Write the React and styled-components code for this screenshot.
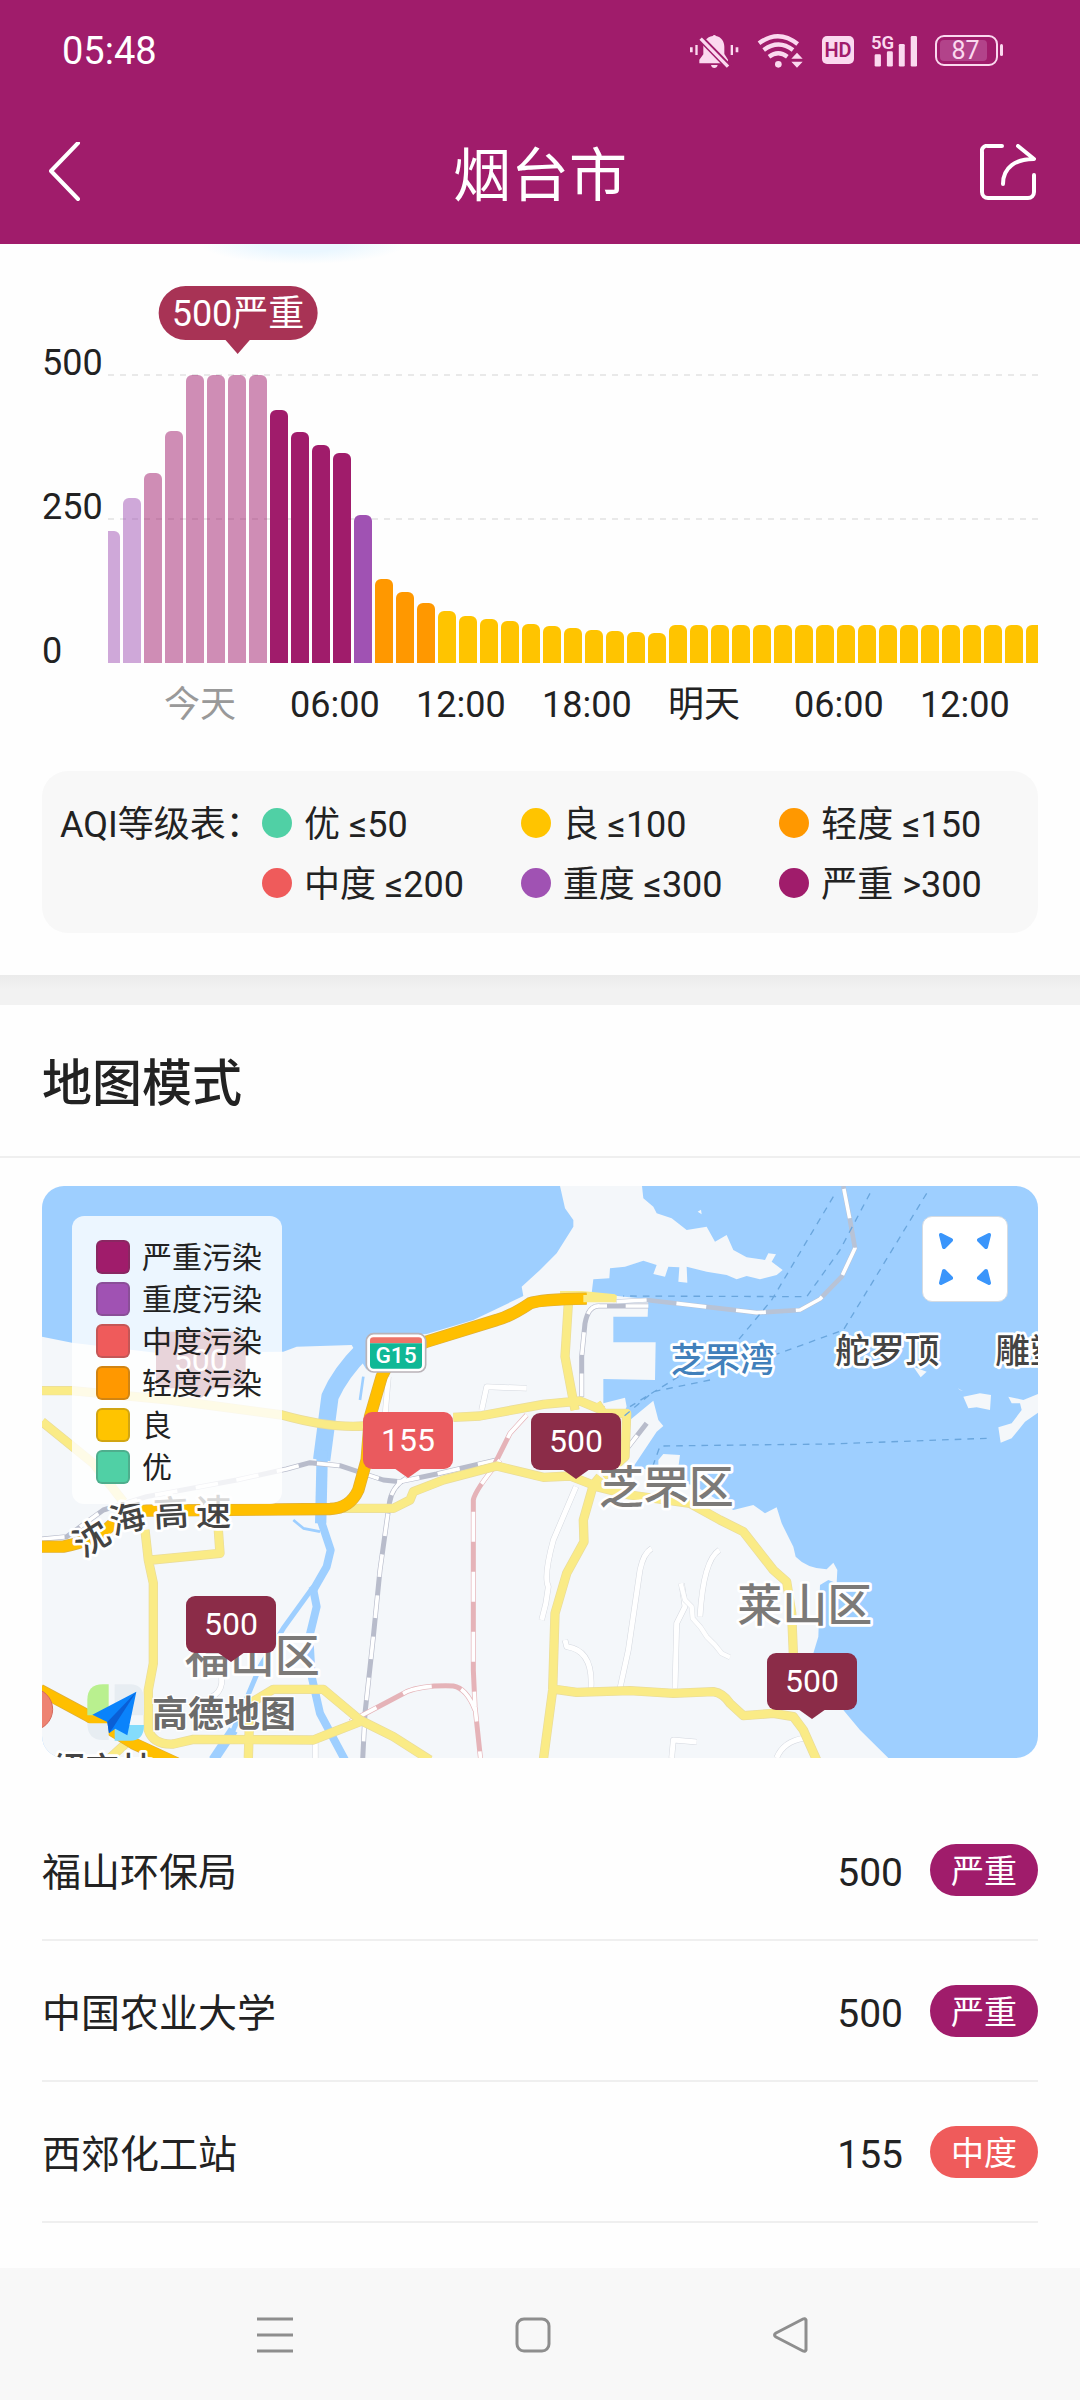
import React from "react";
import styled, { createGlobalStyle } from "styled-components";

const LEVEL = {
  good: "#50d0a5",
  fair: "#ffc400",
  light: "#ff9800",
  medium: "#ef5b5b",
  heavy: "#a052b3",
  severe: "#a01c6b",
};

const GlobalStyle = createGlobalStyle`
  * { box-sizing: border-box; }
  body {
    margin: 0;
    background: #fefefe;
    color: #222;
    font-family: Roboto, "Noto Sans CJK SC", sans-serif;
  }
  button {
    border: 0;
    padding: 0;
    background: none;
    font: inherit;
    color: inherit;
    cursor: pointer;
  }
  h1, h2, ul { margin: 0; padding: 0; }
  svg { display: block; }
`;

const Page = styled.div`
  min-height: 100vh;
  display: flex;
  flex-direction: column;
`;

const Header = styled.header`
  background: ${LEVEL.severe};
  color: #fff;
`;

const StatusBar = styled.div`
  height: 104px;
  padding: 0 77px 4px 62px;
  display: flex;
  align-items: center;
  justify-content: space-between;
`;

const Clock = styled.span`
  padding-top: 2px;
  font-size: 38px;
  line-height: 46px;
`;

const StatusIcons = styled.div`
  display: flex;
  align-items: center;
  gap: 17px;
  color: #fbd9ef;
`;

const HdBadge = styled.span`
  width: 32px;
  height: 28px;
  border-radius: 5px;
  background: #fbd9ef;
  color: ${LEVEL.severe};
  font-size: 20px;
  font-weight: 600;
  line-height: 28px;
  text-align: center;
`;

const Battery = styled.span`
  display: flex;
  align-items: center;
  gap: 2px;
  &::after {
    content: "";
    width: 3px;
    height: 12px;
    border-radius: 2px;
    background: #fbd9ef;
  }
`;

const BatteryCase = styled.span`
  width: 63px;
  height: 31px;
  border: 2px solid #fbd9ef;
  border-radius: 9px;
  padding: 3px;
  display: flex;
`;

const BatteryFill = styled.span`
  flex: 1;
  margin-right: 6px;
  padding-left: 4px;
  border-radius: 4px;
  background: #b2438a;
  font-size: 25px;
  line-height: 22px;
  text-align: center;
`;

const TitleBar = styled.div`
  height: 140px;
  padding: 0 44px 0 49px;
  display: grid;
  grid-template-columns: 1fr auto 1fr;
  align-items: center;
`;

const City = styled.h1`
  padding: 4px 5px 0 0;
  font-size: 58px;
  line-height: 80px;
  font-weight: 400;
`;

const ShareButton = styled.button`
  justify-self: end;
`;

const Forecast = styled.section`
  position: relative;
  padding: 98px 42px 42px;
`;

const Glow = styled.div`
  position: absolute;
  top: 0;
  left: 200px;
  width: 206px;
  height: 20px;
  background: radial-gradient(ellipse 50% 100% at 50% 0, #eaf7ff 40%, #fefefe 100%);
`;

const Chart = styled.div`
  display: grid;
  grid-template-columns: 66px 1fr;
`;

const YAxis = styled.div`
  height: 330px;
  display: flex;
  flex-direction: column;
  justify-content: space-between;
  font-size: 36px;
  line-height: 42px;
`;

const Plot = styled.div`
  position: relative;
  height: 288px;
  margin-top: 33px;
  min-width: 0;
`;

const GridLine = styled.div`
  position: absolute;
  left: 0;
  right: 0;
  top: ${(p) => p.$top};
  height: 2px;
  margin-top: -1px;
  background: repeating-linear-gradient(90deg, #e9e9e9 0 6px, transparent 6px 12px);
`;

const Bars = styled.div`
  position: relative;
  height: 100%;
  display: flex;
  align-items: flex-end;
  justify-content: center;
  gap: 3px;
  overflow: hidden;
`;

const Bar = styled.div`
  flex: 0 0 18px;
  border-radius: 6px 6px 0 0;
  background: ${(p) => LEVEL[p.$level]};
  opacity: ${(p) => (p.$past ? 0.5 : 1)};
`;

const Bubble = styled.div`
  position: absolute;
  left: 130px;
  bottom: calc(100% + 35px);
  transform: translateX(-50%);
  height: 54px;
  padding: 0 13px;
  border-radius: 27px;
  background: #a83355;
  color: #fff;
  font-size: 36px;
  line-height: 56px;
  white-space: nowrap;
  &::after {
    content: "";
    position: absolute;
    top: 100%;
    left: 50%;
    margin: -1px 0 0 -13px;
    border: 13px solid transparent;
    border-top: 15px solid #a83355;
    border-bottom: 0;
  }
`;

const XAxis = styled.div`
  display: flex;
  padding: 12px 0 0 122px;
  font-size: 36px;
  line-height: 42px;
  overflow: hidden;
`;

const Tick = styled.span`
  flex: 0 0 126px;
  color: ${(p) => (p.$past ? "#999" : "#222")};
`;

const LevelCard = styled.div`
  margin-top: 45px;
  padding: 22px 0 20px 18px;
  border-radius: 26px;
  background: #f8f8f8;
  display: grid;
  grid-template-columns: 202px 1fr;
  font-size: 36px;
  line-height: 64px;
`;

const LevelGrid = styled.ul`
  list-style: none;
  display: grid;
  grid-template-columns: repeat(3, 1fr);
`;

const LevelItem = styled.li`
  height: 60px;
  display: flex;
  align-items: flex-start;
  gap: 12px;
  white-space: nowrap;
  &::before {
    content: "";
    width: 30px;
    height: 30px;
    margin-top: 15px;
    border-radius: 50%;
    background: ${(p) => LEVEL[p.$level]};
  }
`;

const Divider = styled.div`
  height: 30px;
  background: linear-gradient(#ebebeb, #f2f2f2 50%);
`;

const SectionTitle = styled.h2`
  padding: 8px 42px 0;
  border-bottom: 2px solid #efefef;
  font-size: 50px;
  font-weight: 500;
  line-height: 143px;
`;

const MapCard = styled.section`
  position: relative;
  margin: 28px 42px 42px;
  border-radius: 22px;
  overflow: hidden;
`;

const MapLegend = styled.ul`
  list-style: none;
  position: absolute;
  top: 30px;
  left: 30px;
  width: 210px;
  && { padding: 18px 0 18px 24px; }
  border-radius: 12px;
  background: rgba(255, 255, 255, 0.8);
  font-size: 30px;
  line-height: 48px;
`;

const MapLegendItem = styled.li`
  height: 42px;
  display: flex;
  align-items: flex-start;
  gap: 12px;
  white-space: nowrap;
  &::before {
    content: "";
    flex: none;
    width: 30px;
    height: 30px;
    margin-top: 6px;
    border: 2px solid rgba(70, 70, 70, 0.25);
    border-radius: 6px;
    background: ${(p) => LEVEL[p.$level]};
  }
`;

const ExpandButton = styled.button`
  position: absolute;
  top: 30px;
  right: 30px;
  width: 86px;
  height: 86px;
  border: 1px solid #d5dbe2;
  border-radius: 10px;
  background: #fff;
  display: grid;
  place-items: center;
`;

const Pin = styled.button`
  position: absolute;
  left: ${(p) => (p.$x / 996) * 100}%;
  top: ${(p) => (p.$y / 572) * 100}%;
  width: 90px;
  height: 57px;
  border-radius: 9px;
  background: ${(p) => p.$color};
  color: #fff;
  font-size: 32px;
  line-height: 57px;
  &::after {
    content: "";
    position: absolute;
    top: 100%;
    left: 50%;
    margin: -1px 0 0 -14px;
    border: 14px solid transparent;
    border-top: 10px solid ${(p) => p.$color};
    border-bottom: 0;
  }
`;

const Stations = styled.ul`
  list-style: none;
  flex: 1;
  && { padding: 0 42px 45px; }
`;

const Station = styled.li`
  height: 141px;
  border-bottom: 2px solid #efefef;
  display: flex;
  align-items: center;
  font-size: 39px;
  line-height: 56px;
`;

const StationName = styled.span`
  flex: 1;
  padding-top: 6px;
`;

const StationValue = styled.span`
  padding-top: 6px;
`;

const Pill = styled.span`
  width: 108px;
  height: 52px;
  margin-left: 27px;
  border-radius: 26px;
  background: ${(p) => LEVEL[p.$level]};
  color: #fff;
  font-size: 33px;
  line-height: 56px;
  text-align: center;
`;

const NavBar = styled.nav`
  height: 133px;
  padding-right: 14px;
  background: #f8f8f8;
  display: flex;
  align-items: center;
  justify-content: center;
  gap: 222px;
`;

const bars = [
  [132, "heavy", 1], [165, "heavy", 1], [190, "severe", 1], [232, "severe", 1],
  [288, "severe", 1], [288, "severe", 1], [288, "severe", 1], [288, "severe", 1],
  [253, "severe"], [231, "severe"], [218, "severe"], [210, "severe"], [148, "heavy"],
  [84, "light"], [71, "light"], [60, "light"],
  ...[52, 47, 44, 42, 39, 37, 35, 33, 32, 31, 30].map((h) => [h, "fair"]),
  ...Array.from({ length: 18 }, () => [38, "fair"]),
];

const ticks = ["今天", "06:00", "12:00", "18:00", "明天", "06:00", "12:00"];

const levels = [
  ["good", "优 ≤50"], ["fair", "良 ≤100"], ["light", "轻度 ≤150"],
  ["medium", "中度 ≤200"], ["heavy", "重度 ≤300"], ["severe", "严重 >300"],
];

const mapLevels = [
  ["severe", "严重污染"], ["heavy", "重度污染"], ["medium", "中度污染"],
  ["light", "轻度污染"], ["fair", "良"], ["good", "优"],
];

const pins = [
  { x: 321, y: 226, value: 155, color: "#ea5a5e" },
  { x: 489, y: 227, value: 500, color: "#8b2c48" },
  { x: 144, y: 410, value: 500, color: "#8b2c48" },
  { x: 725, y: 467, value: 500, color: "#8b2c48" },
];

const stations = [
  ["福山环保局", 500, "severe", "严重"],
  ["中国农业大学", 500, "severe", "严重"],
  ["西郊化工站", 155, "medium", "中度"],
];

const BellOff = () => (
  <svg width="49" height="35" viewBox="38 35 147 105" fill="currentColor" role="img" aria-label="静音">
    <path d="M106 44a6 6 0 0 1 10 0c16 3 25 16 25 32v22l11 17v11H66v-11l12-16V76c0-16 10-29 28-32z" />
    <path d="M101 131h20c-1 6-5 9-10 9s-9-3-10-9zM54 71h7v30h-7zM38 78h8v15h-8zM160 71h7v30h-7zM175 78h8v15h-8z" />
    <path d="M66 47l90 92" stroke={LEVEL.severe} strokeWidth="20" />
    <path d="M70 52l82 84" stroke="currentColor" strokeWidth="10" />
  </svg>
);

const Wifi = () => (
  <svg width="49" height="35" viewBox="237 35 147 105" role="img" aria-label="Wi-Fi">
    <g fill="none" stroke="currentColor" strokeWidth="13">
      <path d="M246 66q58-44 116 2" />
      <path d="M260 86q45-33 88 0" />
      <path d="M276 106q28-20 55 0" />
    </g>
    <circle cx="304" cy="129" r="10" fill="currentColor" />
    <path d="M343 112l17-18 17 18zM343 121h34l-17 18z" fill="currentColor" />
  </svg>
);

const Signal = () => (
  <svg width="47" height="35" viewBox="578 35 142 105" fill="currentColor" role="img" aria-label="5G">
    <text x="578" y="83" fontSize="56" fontWeight="600">5G</text>
    <rect x="589" y="99" width="19" height="37" rx="4" />
    <rect x="626" y="90" width="18" height="46" rx="4" />
    <rect x="662" y="68" width="18" height="68" rx="4" />
    <rect x="698" y="44" width="19" height="92" rx="4" />
  </svg>
);

const BackIcon = () => (
  <svg width="32" height="60" viewBox="0 0 32 60" fill="none" stroke="#fff" strokeWidth="4" strokeLinecap="round" strokeLinejoin="round">
    <path d="M29 1L2 29l27 28" />
  </svg>
);

const ShareIcon = () => (
  <svg width="56" height="60" viewBox="0 0 56 60" fill="none" stroke="#fff" strokeWidth="4" strokeLinecap="round" strokeLinejoin="round">
    <path d="M22 2H8a5 5 0 0 0-6 6v40a6 6 0 0 0 6 6h40a6 6 0 0 0 6-6V31" />
    <path d="M38 2l16 13C36 15 23 23 23 40" />
  </svg>
);

const ExpandIcon = () => (
  <svg width="54" height="54" viewBox="0 0 54 54" fill="#3a95fb" stroke="#3a95fb" strokeWidth="4" strokeLinejoin="round">
    <path d="M3 3l10 5-7 7zM51 3l-10 5 7 7zM3 51l10-5-7-7zM51 51l-10-5 7-7z" />
  </svg>
);

const localRoads =
  "M1355 720L1370 650L1490 655 M2068 1140Q2020 1170 2010 1340 M1638 950L1570 1110Q1540 1220 1555 1250Q1550 1300 1535 1350 M1865 1135Q1840 1150 1830 1200L1795 1440L1770 1555 M1955 1240L1965 1310L1940 1360L1935 1555 M1605 1410L1610 1430Q1690 1440 1683 1555 M1925 1764L1930 1710L2000 1716 M2240 1764Q2260 1715 2320 1705 M575 1500L575 1540Q570 1570 545 1580 M856 1764V1720 M1075 620L1065 740";

const ridgeRoad = "M1952 1240L1965 1290L1985 1310L1988 1345L2012 1372L2030 1400L2055 1425L2075 1450L2100 1462";

const yellowRoads =
  "M36 662H126L420 690L756 735Q900 775 1000 768M1270 742L1350 738L1540 703L1650 693L1720 722 M36 755L190 880L280 995 M345 1080L355 1170L370 1240V1480L355 1560V1680Q370 1725 430 1722L490 1708L850 1710L900 1690L990 1655 M655 1764L660 1600L730 1558H880L990 1650L1090 1700L1200 1770 M365 1170L570 1150L565 1080 M940 1015H1090L1140 990L1150 965L1240 930L1400 888L1540 922L1620 918L1690 945L1710 920 M1700 700L1720 730L1790 730L1785 860L1720 920 M1690 945L1660 1050L1662 1115L1610 1210L1575 1330L1568 1560L1540 1770 M1700 950L1800 975L1980 1000L2070 1050L2140 1085L2230 1200L2270 1235L2285 1330L2290 1450 M1575 1558L1640 1567L1800 1562L1930 1570L2050 1565Q2080 1570 2100 1600L2140 1637L2230 1630L2290 1640L2320 1680L2360 1770 M1615 400L1605 560L1635 720 M240 1764L310 1700";

const expressway =
  "M36 1130H100Q200 1110 250 1060Q290 1025 350 1022L900 1017Q960 1015 985 960L1010 870L1020 740L1055 620L1085 560L1190 515L1400 450Q1440 440 1500 400Q1530 388 1670 386 M30 1560L170 1635L310 1720L440 1780";

const railways =
  "M36 1107L110 1100L220 1020L350 980L620 930L770 897L840 878L930 887L1060 930L1110 935L1220 912L1400 870 M1128 925Q1085 950 1078 1000L1050 1200L1030 1400L1005 1630L998 1770 M1855 408H1710Q1675 405 1665 460L1655 560V680 M1780 850L1850 760";

const pinkRailways =
  "M1490 735L1440 790L1395 880M1410 870Q1335 960 1330 990V1500L1335 1610L1352 1770 M960 1655L1130 1565Q1180 1545 1270 1548Q1310 1555 1335 1620";

const seaRailway = "M1760 395L1850 390L2180 428L2310 420L2370 387L2435 320L2475 235L2460 150L2440 48";

const ferries =
  "M2410 80L2225 390L2125 510M2520 70L2430 240L2330 380L1780 378M2690 70L2440 480L2220 560M2040 630L1870 665L1780 740M2010 580L1800 710M2870 805L2400 822L1890 828L1868 890";

const Basemap = () => (
  <svg width="100%" viewBox="36 48 2988 1716" role="img" aria-label="烟台市空气质量地图">
    <rect x="36" y="48" width="2988" height="1716" fill="#9ecfff" />
    <g fill="#f4f7fa">
      <path d="M36 500L126 518L378 548L760 545L800 530L965 525L1010 600L1020 500L1190 492L1330 450L1480 378L1475 350L1530 300L1580 250L1630 170V150L1605 115L1590 48H1836L1840 85L1870 110L1880 130L1925 145L1970 180L2030 170L2055 215L2090 195L2110 240L2150 262L2205 270L2215 250L2238 253L2225 275L2258 300L2240 315L2190 328L2150 318L2120 328L2090 315L2030 305L1970 290L1972 338L1945 335L1948 292L1915 290L1905 320L1870 312L1880 285L1840 272L1785 290L1740 295L1738 325L1690 328L1685 370L1855 388L1853 440H1750V517H1877L1875 630L1720 627V700L1785 683L1790 710L1775 740L1800 750L1870 692L1885 750L1900 768L1880 785L1810 890L1885 905V870L1900 852L1950 855L1940 930L2000 950L2110 1020L2170 1005L2205 1030L2240 1012L2255 1060L2275 1100L2290 1130L2297 1160Q2330 1195 2390 1198L2410 1178L2422 1200L2420 1240L2395 1230L2370 1245L2365 1400L2350 1450L2440 1620L2490 1680L2575 1764H36z" />
      <path d="M2800 680L2850 670L2883 675L2880 720L2840 712L2815 715zM2935 680L2980 690L3024 672V728L2985 755L2945 805L2912 818L2905 772L2945 760L2975 720L2970 700L2945 700zM2650 590L2690 605L2672 622zM2783 655L2800 664L2790 660zM2003 125l10-6 2 14z" />
    </g>
    <g fill="none" stroke="#9ecfff" strokeLinejoin="round">
      <path d="M1000 540Q930 610 900 680L875 870" strokeWidth="52" />
      <path d="M1035 570V620" stroke="#f4f7fa" strokeWidth="26" />
      <path d="M877 840L872 1060" strokeWidth="34" />
      <path d="M872 1050L902 1140L890 1190L850 1260" strokeWidth="24" />
      <path d="M850 1250L760 1375L690 1490L610 1680L550 1770" strokeWidth="15" />
      <path d="M550 1770L610 1680" strokeWidth="30" />
      <path d="M848 1250L860 1310L838 1400L845 1520L870 1630L945 1770" strokeWidth="24" />
      <path d="M790 1050L820 1075L870 1085M1000 620L990 690" strokeWidth="8" />
    </g>
    <g fill="none" strokeLinejoin="round">
      <path d={localRoads} stroke="#d4d8df" strokeWidth="18" />
      <path d={localRoads} stroke="#fff" strokeWidth="15" />
      <path d={ridgeRoad} stroke="#dfe3e8" strokeWidth="16" />
      <path d={ridgeRoad} stroke="#fff" strokeWidth="13" />
      <path d={railways} stroke="#b8bccb" strokeWidth="15" />
      <path d={railways} stroke="#fff" strokeWidth="11" strokeDasharray="68 56" />
      <path d={pinkRailways} stroke="#e5b3b8" strokeWidth="15" />
      <path d={pinkRailways} stroke="#fff" strokeWidth="11" strokeDasharray="90 90" />
      <path d={yellowRoads} stroke="#e9dc9b" strokeWidth="28" />
      <path d={yellowRoads} stroke="#faeb86" strokeWidth="24" />
      <path d="M1590 375H1655L1755 385" stroke="#faeb86" strokeWidth="24" />
      <path d={expressway} stroke="#dcae3c" strokeWidth="37" />
      <path d={expressway} stroke="#ffbf00" strokeWidth="33" />
      <path d="M1660 386H1760" stroke="#faeb86" strokeWidth="22" />
      <path d={seaRailway} stroke="#b8c3d6" strokeWidth="14" />
      <path d={seaRailway} stroke="#fff" strokeWidth="11" strokeDasharray="90 90" />
      <path d={ferries} stroke="#6aa6dd" strokeWidth="4" strokeDasharray="20 18" />
    </g>
    <circle cx="5" cy="1618" r="63" fill="#ee8372" stroke="#d36a5e" strokeWidth="3" />
    <rect x="1009" y="491" width="178" height="115" rx="22" fill="#fff" stroke="#b9b3b8" strokeWidth="5" />
    <path d="M1020 520v-8q0-10 10-10h136q10 0 10 10v8z" fill="#ee7468" />
    <path d="M1020 520h156v65q0 11-11 11h-134q-11 0-11-11z" fill="#10b896" />
    <text x="1098" y="578" fontSize="68" fontWeight="500" fill="#fff" textAnchor="middle">G15</text>
    <g>
      <rect x="378" y="485" width="269" height="170" rx="27" fill="#8b2c48" />
      <path d="M470 654h84l-42 30z" fill="#8b2c48" />
      <text x="512" y="602" fontSize="96" fill="#fff" textAnchor="middle">500</text>
    </g>
    <g fontWeight="500" stroke="#fff" strokeWidth="16" strokeLinejoin="round" style={{ paintOrder: "stroke" }}>
      <text x="1922" y="606" fontSize="104" fill="#4180bb">芝罘湾</text>
      <text x="2416" y="580" fontSize="104" fill="#444">舵罗顶</text>
      <text x="2896" y="580" fontSize="104" fill="#444">雕塑</text>
      <text x="1706" y="1002" fontSize="135" fill="#7c7a78">芝罘区</text>
      <text x="2122" y="1356" fontSize="135" fill="#7c7a78">莱山区</text>
      <text x="464" y="1508" fontSize="135" fill="#7c7a78">福山区</text>
      <text x="160 250 372 498" y="1165 1095 1070 1065" rotate="-32 -14 -3 0" fontSize="106" fill="#444">沈海高速</text>
      <text x="64" y="1835" fontSize="102" fill="#444">绍京林</text>
    </g>
    <g>
      <path d="M172 1636V1590Q172 1543 218 1543H236V1636z" fill="#b9f08f" />
      <path d="M254 1543H300Q342 1543 342 1590V1636H254zM172 1660H236V1710H218Q172 1710 172 1660z" fill="#e7edf2" />
      <path d="M254 1665H342Q342 1712 300 1712H254z" fill="#84dcfb" />
      <path d="M187 1634L319 1565L292 1696L256 1676L237 1690L232 1656z" fill="#0a83fb" />
      <path d="M232 1656L319 1565L250 1672L237 1690z" fill="#0a5fd6" />
    </g>
    <text x="366" y="1670" fontSize="108" fontWeight="700" fill="#6b6b6b" stroke="#fff" strokeWidth="8" style={{ paintOrder: "stroke" }}>高德地图</text>
  </svg>
);

export default function App() {
  return (
    <Page>
      <GlobalStyle />
      <Header>
        <StatusBar>
          <Clock>05:48</Clock>
          <StatusIcons>
            <BellOff />
            <Wifi />
            <HdBadge>HD</HdBadge>
            <Signal />
            <Battery>
              <BatteryCase>
                <BatteryFill>87</BatteryFill>
              </BatteryCase>
            </Battery>
          </StatusIcons>
        </StatusBar>
        <TitleBar>
          <div>
            <button aria-label="返回"><BackIcon /></button>
          </div>
          <City>烟台市</City>
          <ShareButton aria-label="分享"><ShareIcon /></ShareButton>
        </TitleBar>
      </Header>

      <Forecast>
        <Glow />
        <Chart>
          <YAxis>
            <span>500</span>
            <span>250</span>
            <span>0</span>
          </YAxis>
          <Plot>
            <GridLine $top="0" />
            <GridLine $top="50%" />
            <Bars>
              {bars.map(([height, level, past], i) => (
                <Bar key={i} $level={level} $past={past} style={{ height }} />
              ))}
            </Bars>
            <Bubble>500严重</Bubble>
          </Plot>
        </Chart>
        <XAxis>
          {ticks.map((tick, i) => (
            <Tick key={i} $past={i === 0}>{tick}</Tick>
          ))}
        </XAxis>
        <LevelCard>
          <span>AQI等级表：</span>
          <LevelGrid>
            {levels.map(([level, label]) => (
              <LevelItem key={level} $level={level}>{label}</LevelItem>
            ))}
          </LevelGrid>
        </LevelCard>
      </Forecast>

      <Divider />
      <SectionTitle>地图模式</SectionTitle>

      <MapCard>
        <Basemap />
        {pins.map((pin) => (
          <Pin key={pin.x} $x={pin.x} $y={pin.y} $color={pin.color}>{pin.value}</Pin>
        ))}
        <MapLegend>
          {mapLevels.map(([level, label]) => (
            <MapLegendItem key={level} $level={level}>{label}</MapLegendItem>
          ))}
        </MapLegend>
        <ExpandButton aria-label="全屏"><ExpandIcon /></ExpandButton>
      </MapCard>

      <Stations>
        {stations.map(([name, value, level, label]) => (
          <Station key={name}>
            <StationName>{name}</StationName>
            <StationValue>{value}</StationValue>
            <Pill $level={level}>{label}</Pill>
          </Station>
        ))}
      </Stations>

      <NavBar>
        <button aria-label="最近任务">
          <svg width="36" height="36" viewBox="0 0 36 36" stroke="#8e8e8e" strokeWidth="3">
            <path d="M0 2h36M0 18h36M0 34h36" />
          </svg>
        </button>
        <button aria-label="主页">
          <svg width="36" height="36" viewBox="0 0 36 36" fill="none" stroke="#8e8e8e" strokeWidth="3">
            <rect x="2" y="2" width="32" height="32" rx="7" />
          </svg>
        </button>
        <button aria-label="后退">
          <svg width="36" height="36" viewBox="0 0 36 36" fill="none" stroke="#8e8e8e" strokeWidth="3" strokeLinejoin="round">
            <path d="M33 3v30q-1 2-3 1L3 20q-3-2 0-4L30 2q2-1 3 1z" />
          </svg>
        </button>
      </NavBar>
    </Page>
  );
}
